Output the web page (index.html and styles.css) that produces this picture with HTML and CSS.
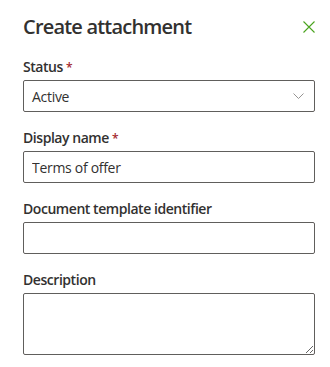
FILE: index.html
```html
<!DOCTYPE html>
<html lang="en">
<head>
    <meta charset="UTF-8">
    <title>Create attachment</title>
    <link rel="stylesheet" href="styles.css">
</head>
<body>
    <div class="panel">
        <header class="panel-header">
            <h1>Create attachment</h1>
            <button class="close" aria-label="Close">
                <svg width="12" height="12" viewBox="0 0 12 12"><path d="M0.5 0.5 L11.5 11.5 M11.5 0.5 L0.5 11.5" stroke="#4aa41f" stroke-width="1.1" fill="none"/></svg>
            </button>
        </header>

        <div class="field">
            <label>Status <span class="req">*</span></label>
            <div class="select">
                <span>Active</span>
                <svg width="11" height="6" viewBox="0 0 11 6"><path d="M0.5 0.5 L5.5 5.5 L10.5 0.5" stroke="#8a8886" stroke-width="0.9" fill="none"/></svg>
            </div>
        </div>

        <div class="field">
            <label>Display name <span class="req">*</span></label>
            <input class="text" type="text" value="Terms of offer">
        </div>

        <div class="field">
            <label>Document template identifier</label>
            <input class="text" type="text">
        </div>

        <div class="field">
            <label>Description</label>
            <textarea class="area"></textarea>
        </div>
    </div>
</body>
</html>
```

FILE: styles.css
```css
/* styles.css */
body {
    margin: 0;
    background: #fff;
    font-family: "Open Sans", "Noto Sans", sans-serif;
    color: #323130;
}

.panel {
    padding: 12px 15px 0 23px;
}

.panel-header {
    display: flex;
    justify-content: space-between;
    align-items: center;
    height: 30px;
    margin-bottom: 15px;
}

.panel-header h1 {
    margin: 0;
    font-size: 20px;
    font-weight: 600;
    line-height: 28px;
    letter-spacing: -0.8px;
}

.close {
    background: none;
    border: none;
    padding: 0;
    display: flex;
}

.field {
    margin-bottom: 16px;
}

.field label {
    display: block;
    font-size: 14px;
    font-weight: 600;
    line-height: 20px;
    height: 20px;
    margin-bottom: 3px;
    letter-spacing: -0.45px;
}

.req {
    color: #a4262c;
    font-size: 12px;
    line-height: 0;
}

.select,
.text,
.area {
    box-sizing: border-box;
    width: 100%;
    border: 1px solid #605e5c;
    border-radius: 2px;
    font-family: inherit;
    font-size: 14px;
    letter-spacing: -0.3px;
    color: #323130;
    background: #fff;
}

.select {
    height: 32px;
    display: flex;
    justify-content: space-between;
    align-items: center;
    padding: 0 10px 0 8px;
}

.text {
    height: 32px;
    padding: 0 8px;
    margin: 0;
}

.area {
    display: block;
    height: 62px;
    padding: 6px 8px;
    resize: vertical;
    margin: 0;
}
```
